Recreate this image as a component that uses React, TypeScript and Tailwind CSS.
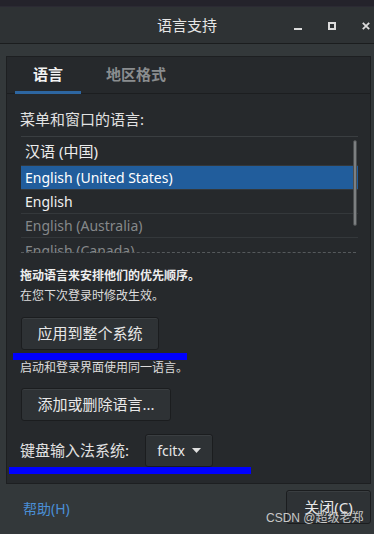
import React from "react";

const font = { fontFamily: '"Noto Sans", "Noto Sans CJK SC", sans-serif' };

function Btn({ children, className = "" }: { children: React.ReactNode; className?: string }) {
  return (
    <div
      className={
        "flex items-center justify-center rounded-[3px] border border-[#1b1d1f] bg-[#2e3235] text-[#e8e8e8] shadow-[inset_0_1px_0_#3a3e41] " +
        className
      }
    >
      {children}
    </div>
  );
}

export default function App() {
  return (
    <div className="w-[374px] h-[534px] bg-[#33383a] flex flex-col overflow-hidden relative" style={font}>
      <div className="h-[7px] bg-[#24232b] border-b border-[#2b2a33]" />
      <div className="h-[37px] bg-[#2e3234] border-b border-[#1b1d1e] flex items-center relative">
        <div className="absolute left-0 right-0 top-[7px] text-center text-[15px] leading-[22px] text-[#e6e6e6]">语言支持</div>
        <div className="ml-auto flex items-center gap-[26px] pr-[4px] relative mt-[1px]">
          <div className="w-[8px] h-[2px] bg-[#dcdcdc] mt-[6px]" />
          <div className="w-[8px] h-[8px] border-2 border-[#dcdcdc]" />
          <svg width="8" height="8" viewBox="0 0 8 8">
            <path d="M0.8 0.8 L7.2 7.2 M7.2 0.8 L0.8 7.2" stroke="#dcdcdc" strokeWidth="1.8" />
          </svg>
        </div>
      </div>
      <div className="mt-[12px] ml-[6px] mr-[3px] h-[428px] border border-[#1d1f21] bg-[#26292c] flex flex-col">
        <div className="h-[37px] border-b border-[#1c1e20] flex items-end relative">
          <div className="w-[66px] ml-[8px] h-[37px] flex flex-col items-center justify-center relative">
            <span className="text-[15px] font-bold text-[#f2f2f2]">语言</span>
            <div className="absolute bottom-[-1px] left-0 right-0 h-[3px] bg-[#2d66a1]" />
          </div>
          <div className="h-[37px] flex items-center ml-[25px]">
            <span className="text-[15px] font-bold text-[#8a8d8f]">地区格式</span>
          </div>
        </div>
        <div className="pl-[13px] pr-[12px] flex flex-col">
          <div className="mt-[15px] text-[15px] text-[#e2e2e2] leading-[20px]">菜单和窗口的语言:</div>
          <div className="mt-[7px] ml-[1px] border-t border-[#3a3e41] relative h-[117px] overflow-hidden">
            <div className="h-[29px] flex items-center pl-[4px] text-[15px] text-[#ececec] border-b border-[#34383b]">汉语 (中国)</div>
            <div className="h-[24px] flex items-center pl-[4px] text-[14px] text-white bg-[#215d9c] border-b border-[#34383b]">English (United States)</div>
            <div className="h-[24px] flex items-center pl-[4px] text-[14px] text-[#f0f0f0] border-b border-[#34383b]">English</div>
            <div className="h-[24px] flex items-center pl-[4px] text-[14px] text-[#85888a] border-b border-[#34383b]">English (Australia)</div>
            <div className="h-[24px] flex items-center pl-[4px] text-[14px] text-[#85888a]">English (Canada)</div>
            <div className="absolute left-0 right-[2px] top-[115px] border-t border-dashed border-[#55595c]" />
            <div className="absolute right-[1px] top-[3px] w-[4px] h-[86px] rounded-[2px] bg-[#7c7f81] border border-[#4a4d4f]" />
          </div>
          <div className="mt-[14px] text-[12px] font-bold text-[#eeeeee] leading-[17px]">拖动语言来安排他们的优先顺序。</div>
          <div className="mt-[3px] text-[12px] text-[#dddddd] leading-[17px]">在您下次登录时修改生效。</div>
          <Btn className="mt-[13px] ml-[1px] w-[138px] h-[33px] text-[15px]">应用到整个系统</Btn>
          <div className="mt-[9px] text-[12px] text-[#dddddd] leading-[17px]">启动和登录界面使用同一语言。</div>
          <Btn className="mt-[12px] ml-[1px] w-[150px] h-[33px] text-[15px]">添加或删除语言...</Btn>
          <div className="mt-[13px] flex items-center">
            <span className="text-[15px] text-[#e2e2e2]">键盘输入法系统:</span>
            <Btn className="ml-[16px] w-[68px] h-[33px] text-[14px] gap-[7px]">
              <span>fcitx</span>
              <svg width="9" height="5" viewBox="0 0 9 5"><path d="M0 0 H9 L4.5 5 Z" fill="#e0e0e0" /></svg>
            </Btn>
          </div>
        </div>
      </div>
      <div className="flex items-center mt-[6px] pl-[6px] pr-[3px]">
        <span className="ml-[17px] mt-[3px] text-[14px] text-[#4a8fd6]">帮助(H)</span>
        <Btn className="ml-auto w-[85px] h-[34px] text-[15px]">关闭(C)</Btn>
      </div>
      <div className="absolute left-[13px] top-[353px] w-[174px] h-[7px] bg-[#0000ff]" />
      <div className="absolute left-[9px] top-[467px] w-[242px] h-[7px] bg-[#0000ff]" />
      <div className="absolute left-[266px] top-[510px] text-[12px] text-[#c8c8c8] leading-[16px] whitespace-nowrap" style={{ fontFamily: '"Liberation Sans", "Noto Sans CJK SC", sans-serif' }}>
        CSDN @超级老郑
      </div>
    </div>
  );
}
